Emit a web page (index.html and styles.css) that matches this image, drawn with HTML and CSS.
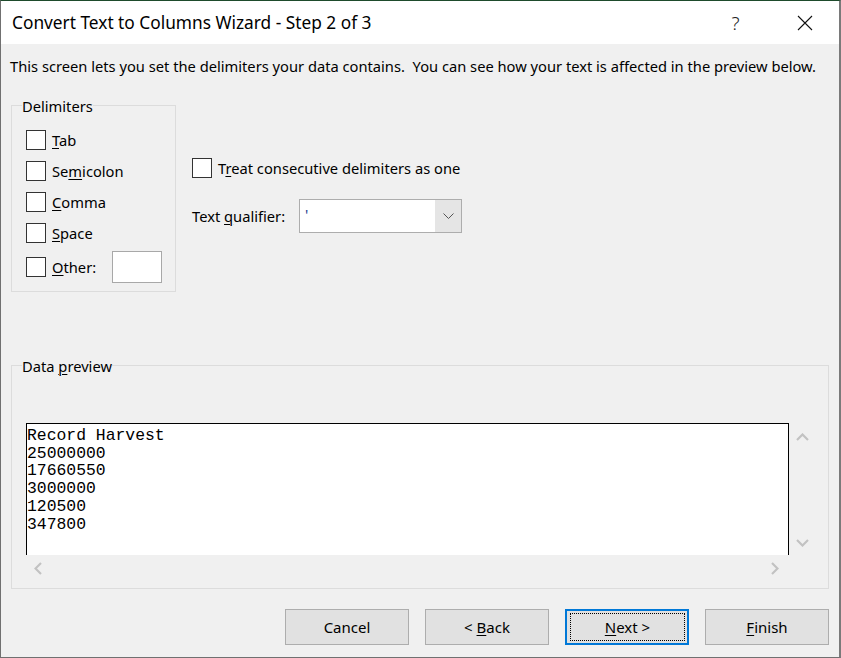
FILE: index.html
```html
<!DOCTYPE html>
<html lang="en">
<head>
<meta charset="utf-8">
<title>Convert Text to Columns Wizard - Step 2 of 3</title>
<link rel="stylesheet" href="styles.css">
</head>
<body>
<div class="window">
  <header class="titlebar">
    <span class="title">Convert Text to Columns Wizard - Step 2 of 3</span>
    <div class="title-buttons">
      <span class="tb help">?</span>
      <span class="tb close"><svg width="16" height="16" viewBox="0 0 16 16"><path d="M1 1 L15 15 M15 1 L1 15" stroke="#111" stroke-width="1.1" fill="none"/></svg></span>
    </div>
  </header>
  <main class="content">
    <p class="intro">This screen lets you set the delimiters your data contains.&nbsp; You can see how your text is affected in the preview below.</p>
    <div class="top">
      <fieldset class="group delims">
        <legend>Delimiters</legend>
        <label class="check"><span class="box"></span><span><u>T</u>ab</span></label>
        <label class="check"><span class="box"></span><span>Se<u>m</u>icolon</span></label>
        <label class="check"><span class="box"></span><span><u>C</u>omma</span></label>
        <label class="check"><span class="box"></span><span><u>S</u>pace</span></label>
        <div class="check other"><span class="box"></span><span><u>O</u>ther:</span><span class="textbox"></span></div>
      </fieldset>
      <div class="options">
        <label class="check"><span class="box"></span><span>T<u>r</u>eat consecutive delimiters as one</span></label>
        <div class="qualifier">
          <span class="qlabel">Text <u>q</u>ualifier:</span>
          <div class="combo">
            <span class="combo-value">'</span>
            <span class="combo-btn"><svg width="11" height="7" viewBox="0 0 11 7"><path d="M0.5 0.5 L5.5 5.5 L10.5 0.5" stroke="#555" stroke-width="1" fill="none"/></svg></span>
          </div>
        </div>
      </div>
    </div>
    <fieldset class="group preview-group">
      <legend>Data <u>p</u>review</legend>
      <div class="preview">
        <pre class="preview-text">Record Harvest
25000000
17660550
3000000
120500
347800</pre>
        <div class="vscroll">
          <svg width="13" height="8" viewBox="0 0 13 8"><path d="M1 7 L6.5 1.5 L12 7" stroke="#c2c2c2" stroke-width="2.2" fill="none"/></svg>
          <svg width="13" height="8" viewBox="0 0 13 8"><path d="M1 1 L6.5 6.5 L12 1" stroke="#c2c2c2" stroke-width="2.2" fill="none"/></svg>
        </div>
        <div class="hscroll">
          <svg width="8" height="13" viewBox="0 0 8 13"><path d="M7 1 L1.5 6.5 L7 12" stroke="#c2c2c2" stroke-width="2.2" fill="none"/></svg>
          <svg width="8" height="13" viewBox="0 0 8 13"><path d="M1 1 L6.5 6.5 L1 12" stroke="#c2c2c2" stroke-width="2.2" fill="none"/></svg>
        </div>
        <div class="corner"></div>
      </div>
    </fieldset>
    <footer class="buttons">
      <button class="btn" type="button">Cancel</button>
      <button class="btn" type="button">&lt; <u>B</u>ack</button>
      <button class="btn default" type="button"><span class="focus"><u>N</u>ext &gt;</span></button>
      <button class="btn" type="button"><u>F</u>inish</button>
    </footer>
  </main>
</div>
</body>
</html>
```
FILE: styles.css
```css
* { box-sizing: border-box; }
html, body { margin: 0; padding: 0; }
body {
  width: 841px;
  height: 658px;
  overflow: hidden;
  font-family: "Noto Sans", "Open Sans", sans-serif;
  font-size: 14.7px;
  color: #000;
  background: #f0f0f0;
}
u { text-decoration: underline; text-underline-offset: 2px; text-decoration-thickness: 1px; }

.window {
  width: 841px;
  height: 658px;
  display: flex;
  flex-direction: column;
  background: #f0f0f0;
  border-top: 1px solid #1e4b2c;
  border-left: 1px solid #707070;
  border-right: 2px solid #7a7a7a;
  border-bottom: 1px solid #707070;
}

.titlebar {
  height: 43px;
  flex: none;
  background: #fff;
  display: flex;
  align-items: center;
  padding-left: 11px;
}
.title { font-size: 17.3px; line-height: 24px; color: #000; }
.title-buttons { margin-left: auto; display: flex; height: 43px; }
.tb { width: 69px; height: 43px; display: flex; align-items: center; justify-content: center; }
.help { font-size: 19px; font-weight: 300; color: #222; }

.content { flex: 1; display: flex; flex-direction: column; }

.intro {
  margin: 12px 0 0 9px;
  line-height: 20px;
  white-space: nowrap;
}

.top { display: flex; margin: 19px 0 0 10px; }

.group {
  margin: 0;
  border: 1px solid #dcdcdc;
  min-width: 0;
}
.group legend {
  padding: 0;
  margin-left: -4px;
  line-height: 20px;
  position: relative;
  top: 1px;
}

.delims {
  width: 165px;
  height: 197px;
  padding: 15px 13px 0 14px;
}

.check {
  display: flex;
  align-items: center;
  gap: 6px;
  height: 20px;
  margin-bottom: 11px;
}
.box {
  width: 20px;
  height: 20px;
  flex: none;
  border: 1px solid #333;
  background: #fff;
}
.check.other { height: 32px; margin-top: -3px; margin-bottom: 0; }
.textbox {
  margin-left: auto;
  width: 50px;
  height: 32px;
  border: 1px solid #a8a8a8;
  background: #fff;
}

.options { margin-left: 16px; padding-top: 63px; }
.options .check { margin-bottom: 0; }
.qualifier { display: flex; align-items: center; margin-top: 21px; }
.qlabel { width: 107px; }
.combo {
  width: 163px;
  height: 34px;
  border: 1px solid #adadad;
  background: #fff;
  display: flex;
}
.combo-value { flex: 1; padding-left: 5px; line-height: 28px; color: #1a3d8f; }
.combo-btn {
  width: 26px;
  background: #e5e5e5;
  display: flex;
  align-items: center;
  justify-content: center;
}

.preview-group {
  margin: 63px 0 0 10px;
  width: 818px;
  height: 234px;
  padding: 48px 0 0 14px;
}
.preview {
  display: grid;
  grid-template-columns: 763px 26px;
  grid-template-rows: 132px 26px;
}
.preview-text {
  margin: 0;
  background: #fff;
  border: 1px solid #000;
  border-bottom: none;
  padding: 3px 0 0 0;
  font-family: "Liberation Mono", "Courier New", monospace;
  font-size: 16.4px;
  line-height: 17.7px;
  overflow: hidden;
}
.vscroll {
  display: flex;
  flex-direction: column;
  justify-content: space-between;
  align-items: center;
  padding: 10px 0 8px 0;
}
.hscroll {
  display: flex;
  justify-content: space-between;
  align-items: center;
  padding: 0 10px 0 8px;
}

.buttons {
  display: flex;
  justify-content: flex-end;
  gap: 16px;
  margin-top: 20px;
  padding-right: 10px;
}
.btn {
  width: 124px;
  height: 36px;
  margin: 0;
  padding: 0;
  border: 1px solid #adadad;
  background: #e1e1e1;
  font-family: inherit;
  font-size: 15px;
  color: #000;
}
.btn.default {
  border: 2px solid #0078d7;
  padding: 2px 2px 2px 3px;
}
.focus {
  display: flex;
  align-items: center;
  justify-content: center;
  width: 100%;
  height: 100%;
  border: 1px dotted #000;
}
```
